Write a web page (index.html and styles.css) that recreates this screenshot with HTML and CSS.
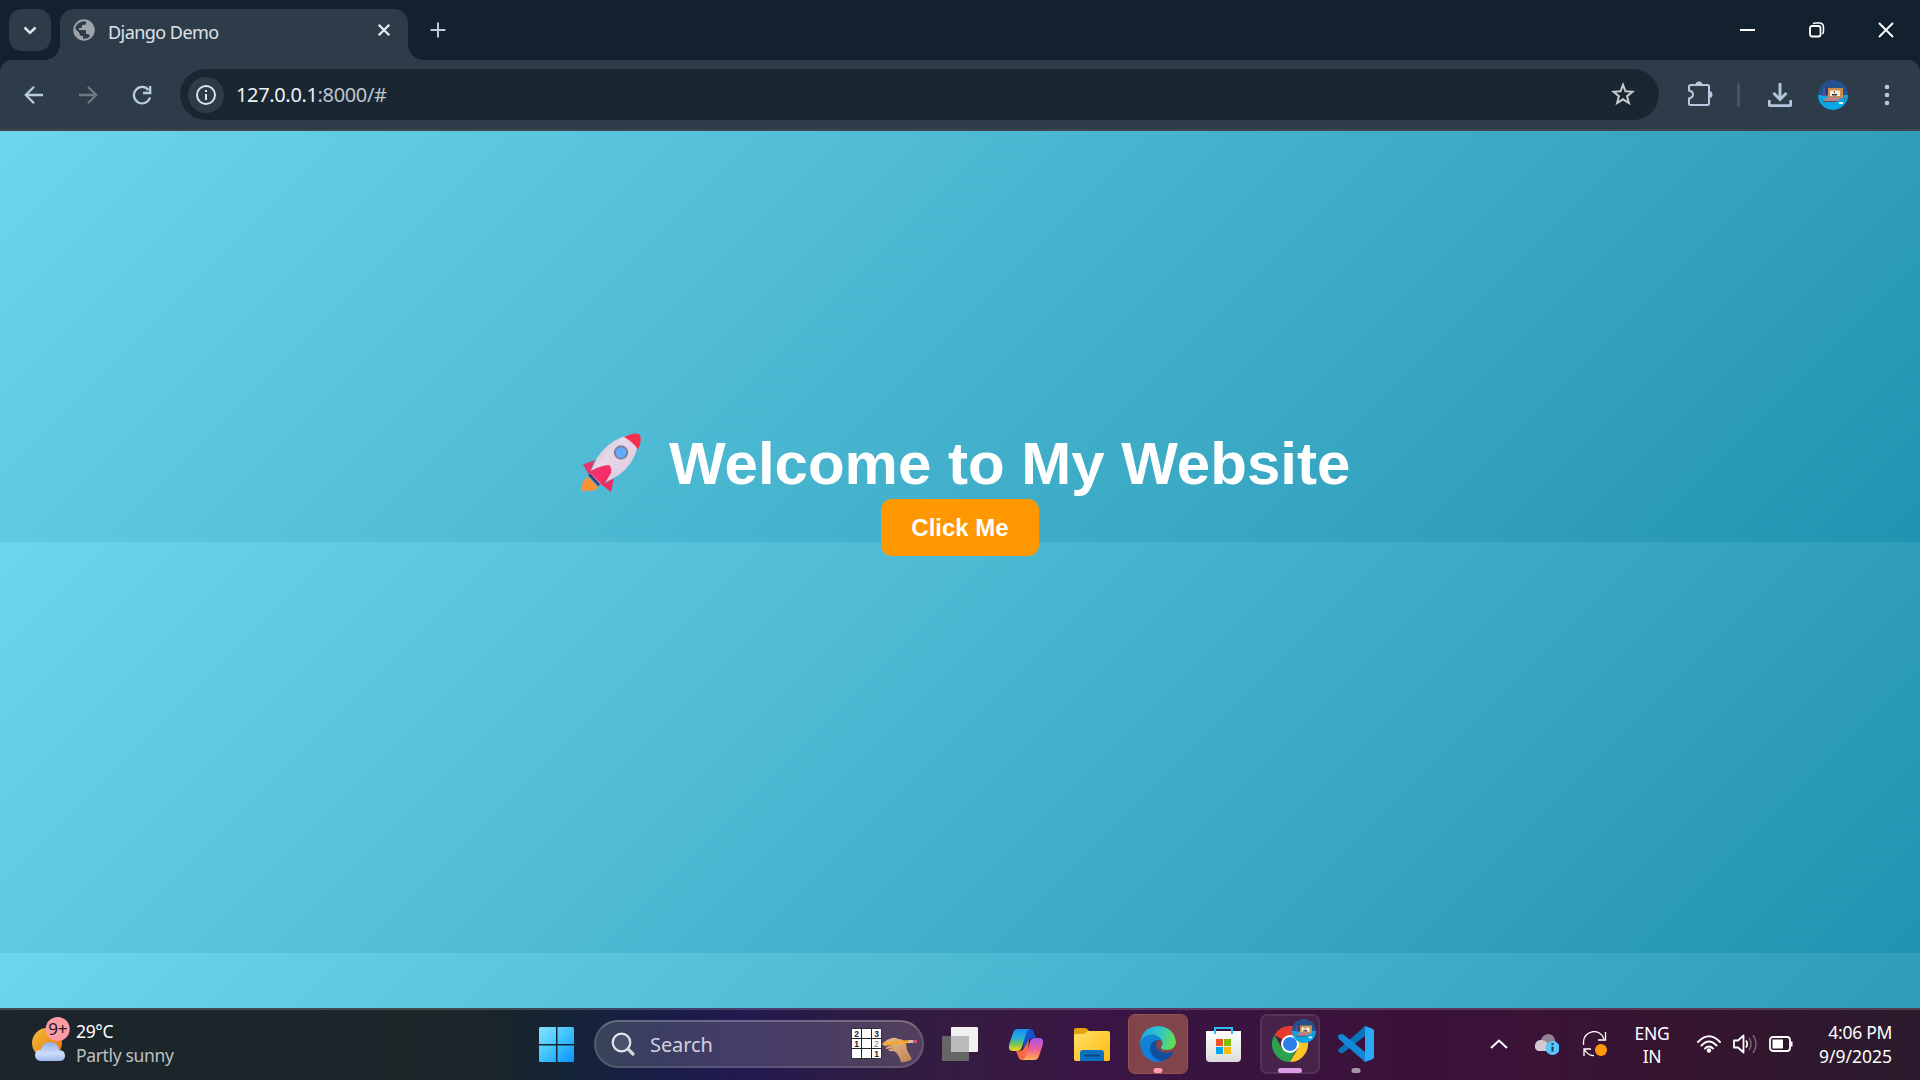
FILE: index.html
```html
<!DOCTYPE html>
<html lang="en">
<head>
<meta charset="utf-8">
<title>Django Demo</title>
<link rel="stylesheet" href="styles.css">
</head>
<body>
<svg class="defs" width="0" height="0" aria-hidden="true">
  <defs>
    <linearGradient id="winA" x1="0" y1="0" x2="1" y2="1"><stop offset="0" stop-color="#8be1fd"/><stop offset=".5" stop-color="#3fc3fb"/><stop offset="1" stop-color="#0a92fb"/></linearGradient>
    <linearGradient id="hull" x1="0" y1="0" x2="1" y2="1"><stop offset="0" stop-color="#b9b2bd"/><stop offset=".4" stop-color="#e6d9e7"/><stop offset="1" stop-color="#dcc5e2"/></linearGradient>
    <linearGradient id="fin" x1="0" y1="0" x2="1" y2="1"><stop offset="0" stop-color="#d93a6e"/><stop offset=".5" stop-color="#fb2f68"/><stop offset="1" stop-color="#e02c62"/></linearGradient>
    <linearGradient id="sun" x1="0" y1="0" x2="1" y2="1"><stop offset="0" stop-color="#edc23a"/><stop offset="1" stop-color="#f5690e"/></linearGradient>
    <linearGradient id="cloud" x1="0" y1="0" x2="0" y2="1"><stop offset="0" stop-color="#8fb0ee"/><stop offset=".6" stop-color="#cddcf7"/><stop offset="1" stop-color="#9db9ef"/></linearGradient>
    <linearGradient id="copA" x1="0" y1="0" x2="0" y2="1"><stop offset="0" stop-color="#1a8cf0"/><stop offset=".4" stop-color="#25b0d8"/><stop offset=".7" stop-color="#7cc653"/><stop offset="1" stop-color="#ffd21c"/></linearGradient>
    <linearGradient id="copB" x1="0" y1="0" x2="0" y2="1"><stop offset="0" stop-color="#a556f0"/><stop offset=".5" stop-color="#ee5a96"/><stop offset="1" stop-color="#ffb055"/></linearGradient>
    <linearGradient id="fold" x1="0" y1="0" x2="1" y2="1"><stop offset="0" stop-color="#ffdf66"/><stop offset="1" stop-color="#fdbb12"/></linearGradient>
    <linearGradient id="edgeA" x1="0" y1=".3" x2="1" y2=".5"><stop offset="0" stop-color="#1fa5e0"/><stop offset=".5" stop-color="#2cc4cf"/><stop offset="1" stop-color="#65e04e"/></linearGradient>
    <linearGradient id="edgeB" x1="0" y1="0" x2=".6" y2="1"><stop offset="0" stop-color="#1583cc"/><stop offset="1" stop-color="#0a7fe2"/></linearGradient>
    <linearGradient id="bag" x1="0" y1="0" x2="0" y2="1"><stop offset="0" stop-color="#fff"/><stop offset="1" stop-color="#dcdcdc"/></linearGradient>
    <linearGradient id="hand" x1="0" y1="0" x2="1" y2="1"><stop offset="0" stop-color="#e9bf92"/><stop offset="1" stop-color="#bd8355"/></linearGradient>
    <clipPath id="disc"><circle cx="15" cy="15" r="15"/></clipPath>
    <symbol id="avatar" viewBox="0 0 30 30">
      <g clip-path="url(#disc)">
        <path fill="#24518b" d="M0 0h30v15H0z"/><path fill="#0aa7e6" d="M0 15h30v15H0z"/>
        <path fill="#5d4a9b" d="M5 8h2v6H5zM4 13h3v3H4z"/><path fill="#163765" d="M8 6h1v10H8z"/>
        <path fill="#c98d50" d="M10 8h15v10H10z"/><path fill="#f4ead2" d="M12 10.500h10V16H12z"/>
        <path fill="#6e5947" d="M16 11h1v2h-1z"/><path fill="#272e37" d="M14 14h5v1.500h-5z"/>
        <path fill="#b78386" d="M10 16.500 5 21h14l6-4z"/>
        <path fill="#5b4a5c" d="M3 19h1v1H3zM26 18h1v2h-1zM5 21h14v1H5z"/>
        <path fill="#e8f3ef" d="M21 22h4v2h-4z"/>
      </g>
    </symbol>
  </defs>
</svg>

<div class="screen">
  <header class="tabs">
    <button class="tab-search" aria-label="Search tabs"><svg width="14" height="14" viewBox="0 0 14 14"><path d="M1.500 4.500 7 9.800 12.500 4.500" fill="none" stroke="#e3e3e8" stroke-width="2.500"/></svg></button>
    <div class="tab">
      <svg width="22" height="22" viewBox="0 0 22 22"><circle cx="11" cy="11" r="9.800" fill="none" stroke="#9fa3aa" stroke-width="1.900"/><path fill="#9fa3aa" d="M13 1.500V4q0 2-2 2H9v2q0 1-1 1H6v2h6q1 0 1 1v3h1.500q1.500 0 2 1.500L18 18.500A10.500 10.500 0 0 0 13 1.500zM1.500 9 6.500 14v1q0 2 2 2H10v4A10.500 10.500 0 0 1 1.500 9z"/></svg>
      <span class="tab-title">Django Demo</span>
      <svg width="14" height="14" viewBox="0 0 14 14"><path d="M1.700 1.700 12.300 12.300M12.300 1.700 1.700 12.300" stroke="#e7eaee" stroke-width="2.300"/></svg>
    </div>
    <svg class="new-tab" width="16" height="16" viewBox="0 0 16 16"><path d="M8 .5v15M.5 8h15" stroke="#bccadd" stroke-width="2"/></svg>
    <div class="window-controls">
      <svg width="16" height="16" viewBox="0 0 16 16"><path d="M0 8h15" stroke="#fff" stroke-width="2"/></svg>
      <svg width="16" height="16" viewBox="0 0 16 16"><rect x="1" y="4" width="10.500" height="10.500" rx="2" fill="none" stroke="#fff" stroke-width="1.800"/><path d="M4 1.500C5 1 6 .9 7 .9h3.500A4 4 0 0 1 14.500 5v4c0 1-.3 2-1 3" fill="none" stroke="#fff" stroke-width="1.500"/></svg>
      <svg width="16" height="16" viewBox="0 0 16 16"><path d="M1 1 15 15M15 1 1 15" stroke="#fff" stroke-width="1.900"/></svg>
    </div>
  </header>

  <nav class="toolbar">
    <svg width="20" height="20" viewBox="0 0 20 20"><path d="M19 10H2.500M10 1.800 1.800 10 10 18.200" fill="none" stroke="#b8cbe0" stroke-width="2.300"/></svg>
    <svg width="20" height="20" viewBox="0 0 20 20"><path d="M1 10h16.500M10 1.800 18.200 10 10 18.200" fill="none" stroke="#6f7983" stroke-width="2.300"/></svg>
    <svg width="20" height="20" viewBox="0 0 20 20"><path d="M18 12.500A8.200 8.200 0 1 1 16.500 5M18.200 1v7H11" fill="none" stroke="#b8cbe0" stroke-width="2.300"/></svg>
    <div class="address">
      <span class="info"><svg width="22" height="22" viewBox="0 0 22 22"><circle cx="11" cy="11" r="9" fill="none" stroke="#e3e6e9" stroke-width="1.900"/><path d="M11 10v6M11 6v2" stroke="#e3e6e9" stroke-width="2"/></svg></span>
      <span class="url"><span class="host">127.0.0.1</span>:8000/#</span>
      <svg class="star" width="24" height="24" viewBox="0 0 24 24"><path d="m12 2.800 2.500 6.500 7 .5-5.400 4.400 1.800 6.900-5.900-3.800-5.900 3.800 1.800-6.900-5.400-4.400 7-.5z" fill="none" stroke="#c7cacf" stroke-width="2"/></svg>
    </div>
    <svg class="ext" width="26" height="26" viewBox="0 0 26 26"><path d="M4 4h16.500Q22 4 22 5.500v17Q22 24 20.500 24h-17Q2 24 2 22.500v-5q4-1 4-4t-4-4V5.500Q2 4 4 4z" fill="none" stroke="#b8c8e0" stroke-width="2"/><path fill="#b8c8e0" d="M8.500 4a3.500 3.500 0 0 1 7 0zM22 10a3.500 3.500 0 0 1 0 7z"/></svg>
    <i class="divider"></i>
    <svg class="download" width="24" height="24" viewBox="0 0 24 24"><path d="M12 0v16M5.500 10 12 16.500 18.500 10M1.200 17v4.300q0 1.500 1.500 1.500h18.600q1.500 0 1.500-1.500V17" fill="none" stroke="#b4c6df" stroke-width="2.900"/></svg>
    <svg class="profile" width="30" height="30"><use href="#avatar"/></svg>
    <svg class="dots" width="6" height="22" viewBox="0 0 6 22"><g fill="#b8c8e0"><circle cx="3" cy="3" r="2.300"/><circle cx="3" cy="11" r="2.300"/><circle cx="3" cy="19" r="2.300"/></g></svg>
  </nav>

  <main class="page">
    <h1 class="welcome">
      <svg width="62" height="61" viewBox="0 0 62 61">
        <path fill="#fd9138" d="M8 45Q1 48 1.500 60q4-3 7-1 5 1 9.500-4z"/>
        <path fill="url(#fin)" d="M15 28 3 32.500 9 43zM34 46l-3 14-9-7z"/>
        <path fill="#37407f" d="m8 43 4-3 10 11-4 3z"/>
        <path fill="url(#hull)" d="M59 2Q32 3 17 26L10 41l10 11 5-2Q58 38 59 2z"/>
        <path fill="#f72f4c" d="M44 5q10-5 15-3 4 4-1 15.500Q53 10 44 5z"/>
        <path fill="url(#fin)" d="M29 33Q18 34 9 40L23 54 31 41q1-6-2-8z"/>
        <circle cx="41" cy="20.500" r="7.200" fill="#81819d"/><circle cx="41" cy="20.500" r="5.200" fill="#60adff"/>
      </svg>
      <span>Welcome to My Website</span>
    </h1>
    <button class="cta">Click Me</button>
  </main>

  <footer class="taskbar">
    <div class="weather">
      <svg width="40" height="46" viewBox="0 0 40 46"><circle cx="17" cy="26" r="15" fill="url(#sun)"/><path fill="url(#cloud)" d="M12 44H10q-5-1-5-6 1-6 6-5 2-8 9-8 8 0 9 8 6 0 6 6 0 5-6 5z"/><circle cx="27.700" cy="12" r="12" fill="#ff9ba5"/><text class="badge" x="27.700" y="18" text-anchor="middle">9+</text></svg>
      <div class="forecast"><span class="temp">29°C</span><span>Partly sunny</span></div>
    </div>

    <div class="apps">
      <div class="app start"><svg width="36" height="36" viewBox="0 0 36 36"><path fill="url(#winA)" d="M1.500 0H17v17H0V1.500Q0 0 1.500 0zM18.500 0h15Q35 0 35 1.500V17H18.500zM0 18.500h17V35H1.500Q0 35 0 33.500zM18.500 18.500H35v15q0 1.500-1.500 1.500h-15z"/></svg></div>
      <div class="search">
        <svg width="24" height="24" viewBox="0 0 24 24"><circle cx="10.500" cy="10.500" r="8.800" fill="#ffffff18" stroke="#e5e5ea" stroke-width="2.200"/><path d="m17 17 5 5" stroke="#d4d4dc" stroke-width="3.200" stroke-linecap="round"/></svg>
        <span>Search</span>
        <svg class="doodle" width="68" height="38" viewBox="0 0 68 38">
          <path fill="#fff" stroke="#333" d="M.5 3.500h30v30h-30z"/><path stroke="#222" d="M10.500 3v31M20.500 3v31M0 13.500h31M0 23.500h31"/>
          <g class="digits"><text x="3.200" y="11.500">2</text><text x="23.200" y="11.500">3</text><text x="3.200" y="21.500">1</text><text class="faint" x="23" y="21.500">2</text><text x="23.200" y="31.500">1</text></g>
          <path fill="url(#hand)" d="m32 18 4-3 5-2q3-1 6 1 6 0 8 5l1 6 5 9q-5 4-11 3-2-8-7-11-4 1-6-1l4-2-6 1q-1-1 1-2l4-2-6 1q-3-1-2-3z"/>
          <path d="m36 21 5-1M37 24l5-1" stroke="#a87350" fill="none"/>
          <path fill="#f7a82c" d="m30 19 5-2 24-2v3l-24 2z"/><path fill="#bfc4d5" d="M58 15h5v3h-5z"/><path fill="#d4506f" d="M62 15h4v3h-4z"/>
        </svg>
      </div>
      <div class="app"><svg width="36" height="34" viewBox="0 0 36 34"><path fill="#f1f1f1" d="M9 1q0-1 1-1h25q1 0 1 1v23q0 1-1 1H9z"/><path fill="#666" d="M0 10q0-1 1-1h26v24q0 1-1 1H1q-1 0-1-1z"/><path fill="#bcbcbc" d="M9 9h18v16H9z"/></svg></div>
      <div class="app"><svg width="34" height="31" viewBox="0 0 34 31"><path fill="#1753c9" d="M16 0h5q3 0 4 4l2 5q-6-1-7 3l-6 8z"/><path fill="#f96749" d="M18 31h-5q-3 0-4-4l-2-5q6 1 8-3l5-8z"/><path fill="url(#copA)" d="M9 0h12q-3 1-4 5l-4 13q-1 4-5 4H4q-5 0-4-6L4 4q1-4 5-4z"/><path fill="url(#copB)" d="M25 31H13q3-1 4-5l4-13q1-4 5-4h4q5 0 4 6l-4 12q-1 4-5 4z"/></svg></div>
      <div class="app"><svg width="36" height="33" viewBox="0 0 36 33"><path fill="#e3a30a" d="M0 2q0-2 2-2h9q2 0 4 3l-2 5H0z"/><path fill="url(#fold)" d="M0 7q0-1 1-1h9l4-3h20q2 0 2 2v26q0 2-2 2H2q-2 0-2-2z"/><path fill="#0a70c2" d="M6 25q0-3 3-3h18q3 0 3 3v8H6z"/><path d="M11 27.500h14" stroke="#0b487f" stroke-width="2" stroke-linecap="round"/></svg></div>
      <div class="app edge"><svg width="36" height="36" viewBox="0 0 36 36"><path fill="url(#edgeB)" d="M0 18Q1 9 10 8q11 0 13 8-2-2-5-1-4 2-4 8 2 9 10 12-6 2-12 0Q1 31 0 18z"/><path fill="#114f9e" d="M18 14q-8 1-8 9 1 9 10 12 8 0 13-8 0-2-2-1-8 3-14-4-2-4 1-8z"/><path fill="url(#edgeA)" d="M0 17Q2 1 18 0q16 1 18 16-1 8-9 8-7 0-6-3 3-4 0-8-5-6-12-4-6 1-9 8z"/><path fill="#80444a" d="M18 14q4-1 4 4l-1 3q-1 3 3 3-2 1-5-1-5-5-1-9z"/></svg></div>
      <div class="app store"><svg width="35" height="35" viewBox="0 0 35 35"><path fill="url(#bag)" d="M0 4h35v27q0 4-4 4H4q-4 0-4-4z"/><path d="M9 7V1h17v6" fill="none" stroke="#2ec0f5" stroke-width="2"/><path fill="#f35325" d="M10 12h7v7h-7z"/><path fill="#81bc06" d="M18 12h7v7h-7z"/><path fill="#05a6f0" d="M10 20h7v7h-7z"/><path fill="#ffba08" d="M18 20h7v7h-7z"/></svg></div>
      <div class="app chrome"><svg width="44" height="43" viewBox="0 0 44 43"><path fill="#e63c30" d="M2.400 16A18 18 0 0 1 33.600 16H18v9z"/><path fill="#2ba24c" d="M2.400 16 10.200 29.500 25 29 18 43A18 18 0 0 1 2.400 16z"/><path fill="#fcc626" d="M18 16H33.600A18 18 0 0 1 18 43L25.800 29.500z"/><circle cx="18" cy="25" r="9" fill="#fff"/><circle cx="18" cy="25" r="7" fill="#2f7de9"/><use href="#avatar" x="20" y="0" width="24" height="24"/></svg></div>
      <div class="app vscode"><svg width="36" height="36" viewBox="0 0 36 36"><path fill="#0a72b8" d="M27 0v10L5 27q-2 1-4-1-2-2 0-3z"/><path fill="#1289d6" d="M1 9q3-2 5 0l21 17v10L1 13q-2-2 0-4z"/><path fill="#2aa7f5" d="m27 0 8 3q1 1 1 2v26q0 1-1 2l-8 3z"/></svg></div>
    </div>

    <div class="tray">
      <svg class="more" width="18" height="12" viewBox="0 0 18 12"><path d="M1 10 9 2.500 17 10" fill="none" stroke="#fff" stroke-width="2"/></svg>
      <svg class="onedrive" width="24" height="24" viewBox="0 0 24 24"><path fill="#8f8292" d="M6 8q1-5 7-6 6 0 7 6l2 6H4z"/><path fill="#d2cad3" d="M3 19q-4-2-3-6 1-5 6-5 4 0 6 3l2 8z"/><circle cx="17.500" cy="16" r="7" fill="#58c4f8"/><path d="M17.500 14.500v5M17.500 11v2" stroke="#153c5b" stroke-width="2"/></svg>
      <svg class="sync" width="26" height="26" viewBox="0 0 26 26"><path d="M1.500 14V12A10.500 10.500 0 0 1 22 8M23.500 1v8H16M9 18H2v7M2 18q4 7 10 6.500" fill="none" stroke="#fff" stroke-width="1.300"/><circle cx="19" cy="19" r="6" fill="#ff9908"/></svg>
      <div class="lang"><span>ENG</span><span>IN</span></div>
      <svg class="wifi" width="24" height="18" viewBox="0 0 24 18"><g fill="none" stroke="#fff" stroke-width="1.900" stroke-linecap="round"><path d="M1 7Q12-4.500 23 7M4.500 10.500Q12 2.500 19.500 10.500M8 13.500q4-4 8 0"/></g><circle cx="12" cy="15.500" r="2.200" fill="#fff"/></svg>
      <svg class="sound" width="24" height="20" viewBox="0 0 24 20"><path d="M1 6.500h4L10.500 1.500v17L5 13.500H1z" fill="none" stroke="#fff" stroke-width="1.800" stroke-linejoin="round"/><path d="M13 6.500q2.500 3.500 0 7" fill="none" stroke="#fff" stroke-width="1.700"/><path d="M16 4q4 6 0 12M20 1q6 9 0 18" fill="none" stroke="#7a6577" stroke-width="1.500"/></svg>
      <svg class="battery" width="25" height="16" viewBox="0 0 25 16"><rect x="1" y="1" width="20" height="14" rx="3" fill="none" stroke="#fff" stroke-width="1.800"/><path fill="#fff" d="M3.500 3.500H14v9H3.500zM21.500 5.500h2v5h-2z"/></svg>
      <div class="clock"><span class="time">4:06 PM</span><span class="date">9/9/2025</span></div>
    </div>
  </footer>
</div>
</body>
</html>
```
FILE: styles.css
```css
* { box-sizing: border-box; }
body { margin: 0; overflow: hidden; background: #12212d; font-family: "Noto Sans", "Open Sans", sans-serif; }
button { border: 0; padding: 0; }
svg { display: block; flex: none; }
.defs { position: absolute; }
.screen { display: flex; flex-direction: column; width: 1920px; height: 1080px; }

.tabs { height: 60px; display: flex; align-items: flex-start; padding: 9px 0 0 9px; background: #12212d; }
.tab-search { width: 42px; height: 42px; border-radius: 13px; background: #2e3c4a; display: grid; place-items: center; }
.tab { position: relative; display: flex; align-items: center; width: 348px; height: 51px; margin-left: 9px; padding: 0 17px 9px 13px; border-radius: 14px 14px 0 0; background: #2e3c4a; }
.tab::before, .tab::after { content: ""; position: absolute; bottom: 0; width: 15px; height: 15px; }
.tab::before { left: -15px; background: radial-gradient(circle at 0 0, transparent 14.5px, #2e3c4a 15px); }
.tab::after { right: -15px; background: radial-gradient(circle at 100% 0, transparent 14.5px, #2e3c4a 15px); }
.tab-title { flex: 1; margin: 3px 0 0 13px; color: #dfe3e8; font-size: 18px; line-height: 24px; letter-spacing: -.55px; white-space: nowrap; }
.new-tab { margin: 13px 0 0 22px; }
.window-controls { display: flex; gap: 53px; margin: 13px 26px 0 auto; }

.toolbar { height: 71px; display: flex; align-items: center; padding: 0 30px 0 24px; border-bottom: 2px solid #3f474c; border-radius: 12px 12px 0 0; background: #2e3c4a; }
.toolbar > svg + svg { margin-left: 34px; }
.address { display: flex; align-items: center; width: 1479px; height: 51px; margin: 0 0 1px 28px; padding: 0 24px 0 8px; border-radius: 26px; background: #192733; }
.info { display: grid; place-items: center; width: 36px; height: 36px; margin-top: 1px; border-radius: 50%; background: #2e3c4a; }
.url { flex: 1; margin: 0 0 0 12px; color: #bfc5ca; font-size: 20px; letter-spacing: -.35px; }
.host { color: #eef1f3; }
.ext { margin: 0 0 2px 28px; }
.divider { width: 3px; height: 24px; margin: 0 28px 0 24px; border-radius: 2px; background: #45556a; }
.toolbar > .profile { margin-left: 26px; }
.toolbar > .dots { margin-left: 36px; }

.page { height: 877px; display: flex; flex-direction: column; align-items: center; padding-top: 298px; background: linear-gradient(135deg, #6dd5ed, #2193b0) 0 0 / 100% 411px; font-family: Arial, "Liberation Sans", sans-serif; color: #fff; }
.welcome { display: flex; align-items: flex-start; gap: 27px; width: 770px; height: 70px; margin: 0; font-size: 60px; line-height: 70px; white-space: nowrap; }
.welcome svg { margin: 3px 0 0 5px; }
.cta { width: 158px; height: 57px; border-radius: 11px; background: #ff9800; color: #fff; font: bold 24px/27px Arial, "Liberation Sans", sans-serif; }

.taskbar { height: 72px; display: grid; grid-template-columns: 526px auto 1fr; border-top: 2px solid #ffffff2b; background: linear-gradient(90deg, #1d252b 0, #1a2629 480px, #152438 570px, #191d47 660px, #231a50 740px, #301c40 890px, #351b42 960px, #3a1544 1100px, #3a1239 1400px, #3a1337 1540px, #35152f 1700px, #2a1a2c 1920px) border-box; }
.weather { display: flex; align-items: flex-start; padding: 7px 0 0 30px; color: #bdc0c3; }
.forecast { display: flex; flex-direction: column; margin: 2px 0 0 6px; font-size: 17.5px; line-height: 24px; letter-spacing: -.35px; }
.temp { color: #fff; }
.badge { font-size: 17px; fill: #1b1b1f; letter-spacing: -.3px; }
.apps { display: flex; align-items: center; padding-bottom: 2px; }
.app { position: relative; display: grid; place-items: center; width: 60px; height: 60px; margin-left: 6px; border-radius: 7px; }
.start { margin: 0; padding: 1px 0 0 2px; }
.search { display: flex; align-items: center; width: 330px; height: 48px; margin-left: 8px; padding: 0 3px 0 15px; border: 2px solid #ffffff20; border-top-color: #ffffff38; border-radius: 24px; background: linear-gradient(90deg, #ffffff26, #ffffff28); color: #d3d1dd; font-size: 20px; letter-spacing: -.1px; }
.search span { flex: 1; margin-left: 15px; }
.digits { font-family: "Liberation Sans", Arial, sans-serif; font-size: 8.5px; font-weight: bold; letter-spacing: 0; fill: #222; }
.faint { font-weight: 400; fill: #777; }
.edge { border: 1px solid #965253; background: #80444a; }
.store { padding-right: 1px; }
.chrome { border: 2px solid #ffffff12; background: #ffffff12; }
.chrome svg { margin: -7px 0 0 7px; }
.edge::after, .chrome::after, .vscode::after { content: ""; position: absolute; bottom: 1px; left: 50%; width: 9px; height: 5px; border-radius: 3px; background: #a795a9; transform: translateX(-50%); }
.edge::after { bottom: 0; background: #ff9ca5; }
.chrome::after { bottom: -1px; width: 24px; background: #dc9ce8; }

.tray { display: flex; align-items: center; justify-content: flex-end; padding: 0 28px 2px 0; color: #fff; font-size: 17.5px; line-height: 23px; letter-spacing: -.3px; }
.onedrive { margin-left: 27px; }
.sync { margin-left: 23px; }
.lang { display: flex; flex-direction: column; align-items: center; width: 40px; margin: 2px 0 0 24px; }
.wifi { margin-left: 25px; }
.sound { margin-left: 12px; }
.battery { margin-left: 12px; }
.clock { display: flex; flex-direction: column; align-items: flex-end; width: 98px; margin-bottom: 1px; line-height: 24px; }
.date { letter-spacing: 0; }
```
